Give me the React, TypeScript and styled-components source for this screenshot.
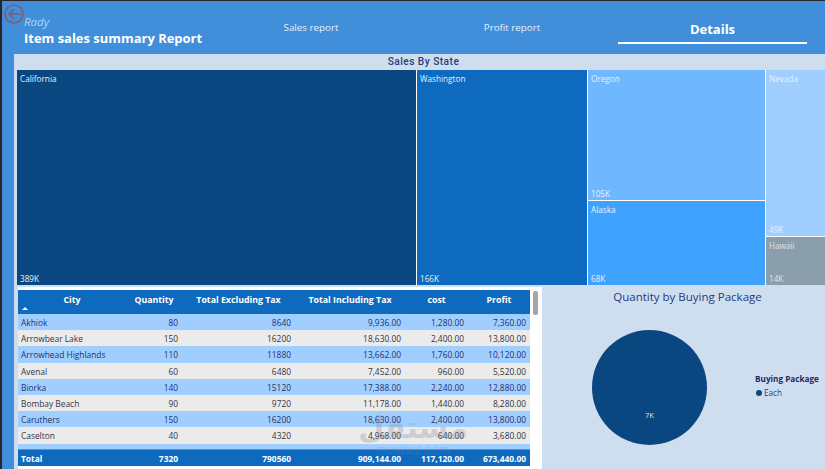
import React from "react";
import styled, { createGlobalStyle } from "styled-components";

const Global = createGlobalStyle`
  html, body { margin: 0; padding: 0; background: #26262b; overflow: hidden; }
  #root { width: 825px; height: 469px; }
  * { box-sizing: border-box; }
`;

const UI = `"Open Sans", "Noto Sans", "Liberation Sans", sans-serif`;

const Page = styled.div`
  position: relative;
  width: 825px;
  height: 469px;
  padding: 1px 0 0 2px;
  background: #26262b;
  font-family: ${UI};
  overflow: hidden;
`;
const Shell = styled.div`
  width: 823px;
  height: 468px;
  background: #418fdb;
  display: flex;
  flex-direction: column;
`;
const Header = styled.header`
  height: 53px;
  flex: none;
  display: flex;
  padding-left: 22px;
`;
const Brand = styled.div`
  width: 186px;
  flex: none;
  padding-top: 14px;
`;
const Rady = styled.div`
  font-size: 11.5px;
  line-height: 14px;
  font-style: italic;
  color: #a9d3f7;
`;
const Title = styled.div`
  font-size: 12.96px;
  line-height: 18px;
  font-weight: 700;
  color: #fff;
  white-space: nowrap;
`;
const Nav = styled.nav`
  display: grid;
  grid-template-columns: 202px 200px 195px;
  height: 43px;
  align-items: stretch;
`;
const NavItem = styled.div<{ $active?: boolean }>`
  display: flex;
  align-items: center;
  justify-content: center;
  margin-left: ${(p) => (p.$active ? 6 : 0)}px;
  padding-top: ${(p) => (p.$active ? 14 : 12)}px;
  font-size: ${(p) => (p.$active ? 13 : 9.8)}px;
  font-weight: ${(p) => (p.$active ? 700 : 400)};
  color: ${(p) => (p.$active ? "#fff" : "#e4effa")};
  border-bottom: 2px solid ${(p) => (p.$active ? "#fff" : "transparent")};
`;
const Content = styled.main`
  flex: 1;
  margin-left: 12px;
  background: #cfdeee;
  display: flex;
  flex-direction: column;
  min-height: 0;
`;
const SectionTitle = styled.div`
  height: 16px;
  flex: none;
  padding-left: 8px;
  text-align: center;
  font-family: Roboto, sans-serif;
  font-size: 10.2px;
  line-height: 15px;
  font-weight: 500;
  letter-spacing: 0.45px;
  color: #23417f;
`;
const Treemap = styled.section`
  height: 215px;
  flex: none;
  margin-left: 3px;
  display: flex;
  gap: 1px;
  background: #fff;
`;
const Column = styled.div<{ $w?: number }>`
  ${(p) => (p.$w ? `width: ${p.$w}px; flex: none;` : "flex: 1; min-width: 0;")}
  display: flex;
  flex-direction: column;
  gap: 1px;
`;
const Tile = styled.div<{ $bg: string; $w?: number; $h?: number; $muted?: boolean }>`
  ${(p) => (p.$w ? `width: ${p.$w}px; flex: none;` : p.$h ? `height: ${p.$h}px; flex: none;` : "flex: 1;")}
  background: ${(p) => p.$bg};
  padding: 3px 3px 1px 3px;
  display: flex;
  flex-direction: column;
  justify-content: space-between;
  font-size: 8.2px;
  line-height: 11px;
  color: ${(p) => (p.$muted ? "#dfe6ea" : "#e6f1fb")};
`;
const Lower = styled.div`
  flex: 1;
  min-height: 0;
  display: flex;
  padding-top: 2px;
`;
const TableCard = styled.section`
  width: 524px;
  margin-left: 4px;
  flex: none;
  background: #fff;
  padding: 3px 0 0 0;
  display: flex;
  position: relative;
`;
const Table = styled.div`
  width: 512px;
  flex: none;
  display: flex;
  flex-direction: column;
  height: 176px;
  font-size: 8.4px;
`;
const Row = styled.div<{ $h?: number }>`
  display: grid;
  grid-template-columns: 108px 56px 113px 110px 63px 62px;
  height: ${(p) => p.$h ?? 16.2}px;
  flex: none;
`;
const HeadRow = styled(Row)`
  background: #0d6abf;
  color: #fff;
  font-weight: 700;
  font-size: 8.8px;
`;
const HeadCell = styled.div`
  position: relative;
  text-align: center;
  line-height: 20px;
  white-space: nowrap;
`;
const SortMark = styled.span`
  position: absolute;
  left: 4px;
  top: 17px;
  width: 0;
  height: 0;
  border-left: 3px solid transparent;
  border-right: 3px solid transparent;
  border-bottom: 3px solid #fff;
`;
const BodyRows = styled.div`
  height: 135px;
  flex: none;
  overflow: hidden;
`;
const BodyRow = styled(Row)<{ $even: boolean }>`
  background: ${(p) => (p.$even ? "#ebebeb" : "#a0ceff")};
  color: ${(p) => (p.$even ? "#33333d" : "#25306f")};
  line-height: 17px;
`;
const Cell = styled.div<{ $left?: boolean }>`
  text-align: ${(p) => (p.$left ? "left" : "right")};
  padding: 0 4px 0 3px;
  white-space: nowrap;
  overflow: hidden;
`;
const TotalRow = styled(Row)`
  background: #0d6abf;
  border-top: 1px solid #3f9be8;
  color: #fff;
  font-weight: 700;
  line-height: 17px;
  height: 17px;
`;
const Scrollbar = styled.div`
  width: 5px;
  height: 24px;
  margin: 1px 0 0 3px;
  border-radius: 2px;
  background: #a7a4a6;
`;
const ChartPanel = styled.section`
  flex: 1;
  min-width: 0;
  display: flex;
  flex-direction: column;
`;
const ChartTitle = styled.div`
  height: 20px;
  padding-left: 8px;
  text-align: center;
  font-size: 11.5px;
  line-height: 20px;
  color: #25397f;
  white-space: nowrap;
`;
const ChartBody = styled.div`
  display: flex;
  padding: 23px 0 0 50px;
`;
const Pie = styled.div`
  width: 115px;
  height: 115px;
  border-radius: 50%;
  background: #0a4780;
  color: #d6e2f0;
  font-size: 7.5px;
  text-align: center;
  padding-top: 80px;
`;
const Legend = styled.div`
  margin: 43px 0 0 48px;
`;
const LegendTitle = styled.div`
  font-size: 8.2px;
  line-height: 12px;
  font-weight: 700;
  color: #1f2a66;
  white-space: nowrap;
`;
const LegendItem = styled.div`
  display: flex;
  align-items: center;
  gap: 2px;
  margin-top: 2px;
  padding-left: 1px;
  font-size: 8.2px;
  line-height: 12px;
  color: #26408a;
`;
const LegendDot = styled.span`
  width: 6px;
  height: 6px;
  border-radius: 50%;
  background: #0a4780;
`;
const BackIcon = styled.svg`
  position: absolute;
  left: 4px;
  top: 4px;
  width: 21px;
  height: 21px;
`;
const Watermark = styled.div`
  position: absolute;
  left: 358px;
  top: 412px;
  width: 110px;
  text-align: center;
  color: rgba(130, 135, 145, 0.28);
  pointer-events: none;
  font-family: "Liberation Sans", "Noto Sans", sans-serif;
`;
const WatermarkLogo = styled.div`
  font-family: "DejaVu Sans", sans-serif;
  font-size: 30px;
  line-height: 32px;
  font-weight: 700;
`;
const WatermarkUrl = styled.div`
  font-size: 12px;
  line-height: 12px;
  letter-spacing: 0.5px;
`;

const rows = [
  ["Akhiok", "80", "8640", "9,936.00", "1,280.00", "7,360.00"],
  ["Arrowbear Lake", "150", "16200", "18,630.00", "2,400.00", "13,800.00"],
  ["Arrowhead Highlands", "110", "11880", "13,662.00", "1,760.00", "10,120.00"],
  ["Avenal", "60", "6480", "7,452.00", "960.00", "5,520.00"],
  ["Biorka", "140", "15120", "17,388.00", "2,240.00", "12,880.00"],
  ["Bombay Beach", "90", "9720", "11,178.00", "1,440.00", "8,280.00"],
  ["Caruthers", "150", "16200", "18,630.00", "2,400.00", "13,800.00"],
  ["Caselton", "40", "4320", "4,968.00", "640.00", "3,680.00"],
  ["Cassel", "100", "10800", "12,420.00", "1,600.00", "9,200.00"],
];
const heads = ["City", "Quantity", "Total Excluding Tax", "Total Including Tax", "cost", "Profit"];
const totals = ["Total", "7320", "790560", "909,144.00", "117,120.00", "673,440.00"];

export default function App() {
  return (
    <Page>
      <Global />
      <Shell>
        <Header>
          <Brand>
            <Rady>Rady</Rady>
            <Title>Item sales summary Report</Title>
          </Brand>
          <Nav>
            <NavItem>Sales report</NavItem>
            <NavItem>Profit report</NavItem>
            <NavItem $active>Details</NavItem>
          </Nav>
        </Header>
        <Content>
          <SectionTitle>Sales By State</SectionTitle>
          <Treemap>
            <Tile $bg="#0a4780" $w={399}>
              <span>California</span>
              <span>389K</span>
            </Tile>
            <Tile $bg="#0d6abf" $w={170}>
              <span>Washington</span>
              <span>166K</span>
            </Tile>
            <Column $w={177}>
              <Tile $bg="#6fb8ff" $h={130}>
                <span>Oregon</span>
                <span>105K</span>
              </Tile>
              <Tile $bg="#3fa2ff">
                <span>Alaska</span>
                <span>68K</span>
              </Tile>
            </Column>
            <Column>
              <Tile $bg="#a0ceff" $h={166}>
                <span>Nevada</span>
                <span>49K</span>
              </Tile>
              <Tile $bg="#8a9eac" $muted>
                <span>Hawaii</span>
                <span>14K</span>
              </Tile>
            </Column>
          </Treemap>
          <Lower>
            <TableCard>
              <Table>
                <HeadRow $h={24}>
                  {heads.map((h, i) => (
                    <HeadCell key={h}>
                      {h}
                      {i === 0 && <SortMark />}
                    </HeadCell>
                  ))}
                </HeadRow>
                <BodyRows>
                  {rows.map((r, i) => (
                    <BodyRow key={r[0]} $even={i % 2 === 1}>
                      {r.map((c, j) => (
                        <Cell key={j} $left={j === 0}>
                          {c}
                        </Cell>
                      ))}
                    </BodyRow>
                  ))}
                </BodyRows>
                <TotalRow>
                  {totals.map((c, j) => (
                    <Cell key={j} $left={j === 0}>
                      {c}
                    </Cell>
                  ))}
                </TotalRow>
              </Table>
              <Scrollbar />
            </TableCard>
            <ChartPanel>
              <ChartTitle>Quantity by Buying Package</ChartTitle>
              <ChartBody>
                <Pie>7K</Pie>
                <Legend>
                  <LegendTitle>Buying Package</LegendTitle>
                  <LegendItem>
                    <LegendDot />
                    Each
                  </LegendItem>
                </Legend>
              </ChartBody>
            </ChartPanel>
          </Lower>
        </Content>
      </Shell>
      <BackIcon viewBox="0 0 21 21" fill="none" stroke="#7b5f73" strokeWidth="1.7">
        <circle cx="10" cy="10" r="9" />
        <path d="M17 10H5M10 5l-5 5 5 5" />
      </BackIcon>
      <Watermark>
        <WatermarkLogo>مستقل</WatermarkLogo>
        <WatermarkUrl>mostaql.com</WatermarkUrl>
      </Watermark>
    </Page>
  );
}
